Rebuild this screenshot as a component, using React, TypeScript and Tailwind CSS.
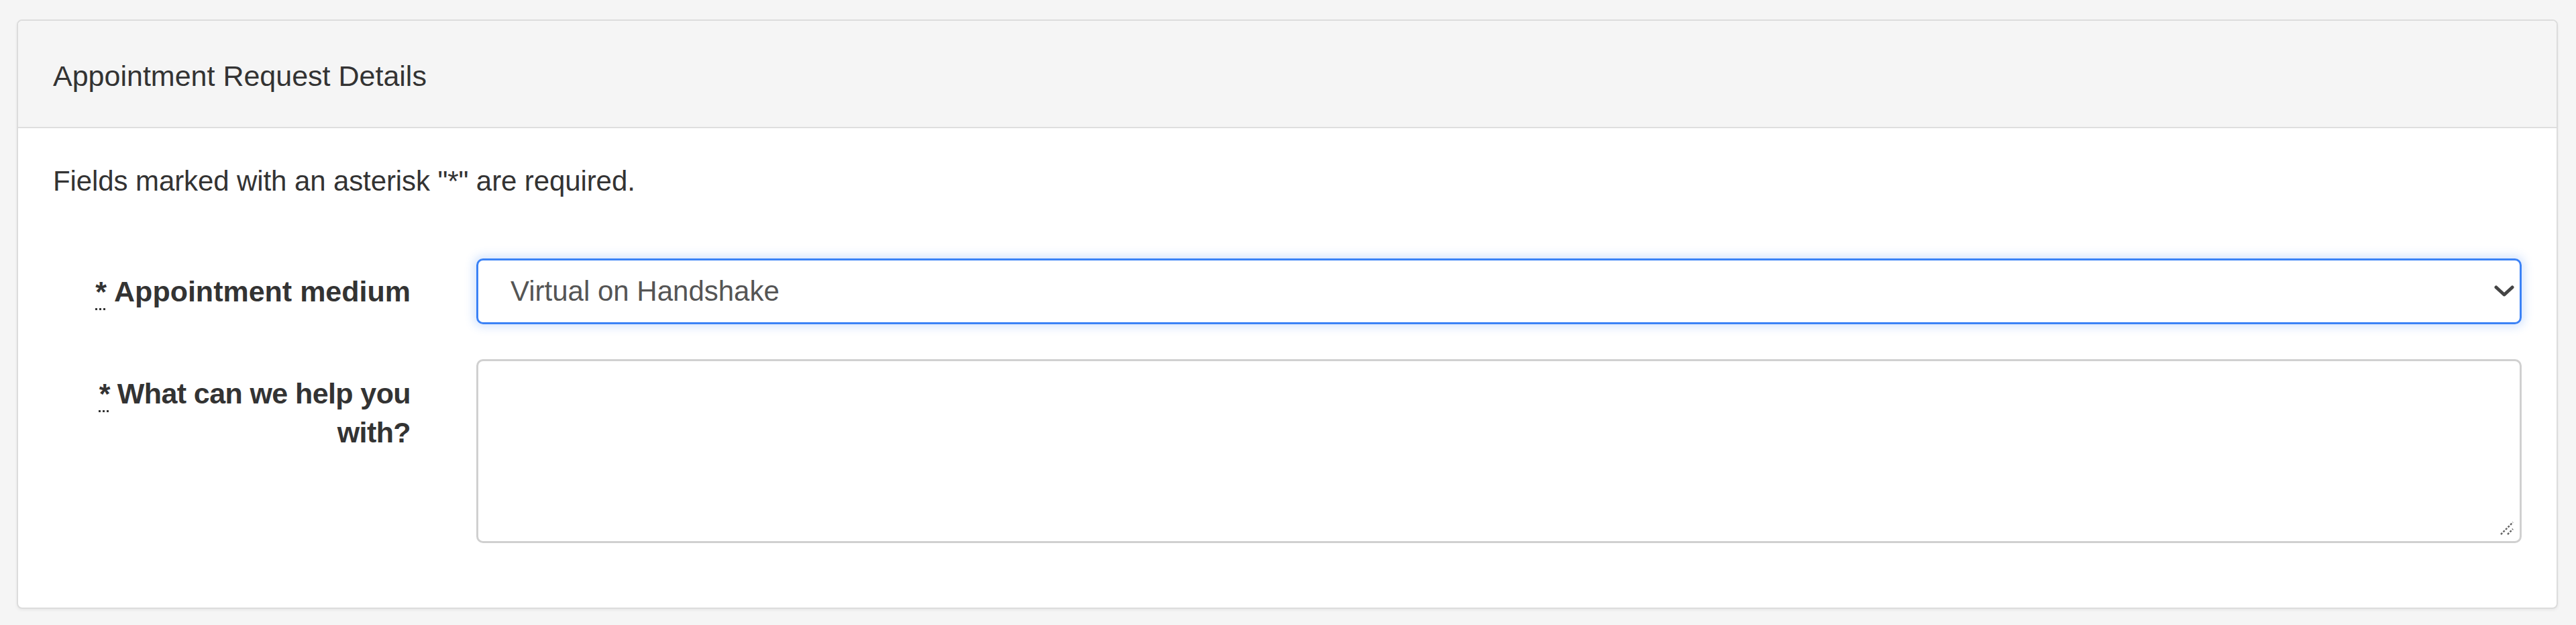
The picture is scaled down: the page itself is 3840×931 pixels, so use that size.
export default function App() {
  return (
    <div className="min-h-[931px] bg-[#f5f5f5] pl-[25px] pr-[27px] pt-[29px] pb-[23px] font-['Liberation_Sans','Helvetica_Neue',Arial,sans-serif] text-[42px] leading-[58px] text-[#333]">
      <div className="rounded-[8px] border-2 border-[#dcdcdc] bg-white shadow-[0_2px_4px_rgba(0,0,0,0.06)] overflow-hidden">
        {/* header */}
        <div className="h-[160px] flex items-center pt-[6px] px-[52px] bg-[#f5f5f5] border-b-2 border-[#dedede]">
          <h2 className="text-[43px] font-normal text-[#333]">Appointment Request Details</h2>
        </div>

        {/* body */}
        <div className="px-[52px] pt-[50px] pb-[96px]">
          <p className="mb-[86px] tracking-[-0.1px]">Fields marked with an asterisk "*" are required.</p>

          <div className="grid grid-cols-[533px_1fr] gap-x-[98px] gap-y-[52px]">
            <label className="flex items-center justify-end text-right text-[43px] font-bold text-[#333]">
              <abbr title="required" className="underline decoration-dotted decoration-[3px] underline-offset-[10px] mr-[11px]">*</abbr>
              Appointment medium
            </label>
            <div className="rounded-[10px] border-[3px] border-[#3b82f6] shadow-[0_0_14px_4px_rgba(59,130,246,0.22)] h-[98px] flex items-center pl-[48px] pr-[8px] text-[#555]">
              <span className="flex-1">Virtual on Handshake</span>
              <svg width="30" height="20" viewBox="0 0 30 20" fill="none">
                <polyline points="3,4 15,15 27,4" stroke="#444" strokeWidth="5" strokeLinecap="round" strokeLinejoin="round" />
              </svg>
            </div>

            <label className="pt-[22px] text-right text-[43px] font-bold tracking-[-0.6px] text-[#333]">
              <abbr title="required" className="underline decoration-dotted decoration-[3px] underline-offset-[10px] mr-[11px]">*</abbr>
              What can we help you with?
            </label>
            <div className="relative h-[274px] rounded-[10px] border-[3px] border-[#d0d0d0]">
              <svg width="22" height="22" viewBox="0 0 22 22" className="absolute right-[8px] bottom-[8px]">
                <line x1="2" y1="20" x2="20" y2="2" stroke="#666" strokeWidth="2.5" strokeDasharray="3 2" />
                <line x1="12" y1="20" x2="20" y2="12" stroke="#666" strokeWidth="2.5" strokeDasharray="3 2" />
              </svg>
            </div>
          </div>
        </div>
      </div>
    </div>
  );
}
